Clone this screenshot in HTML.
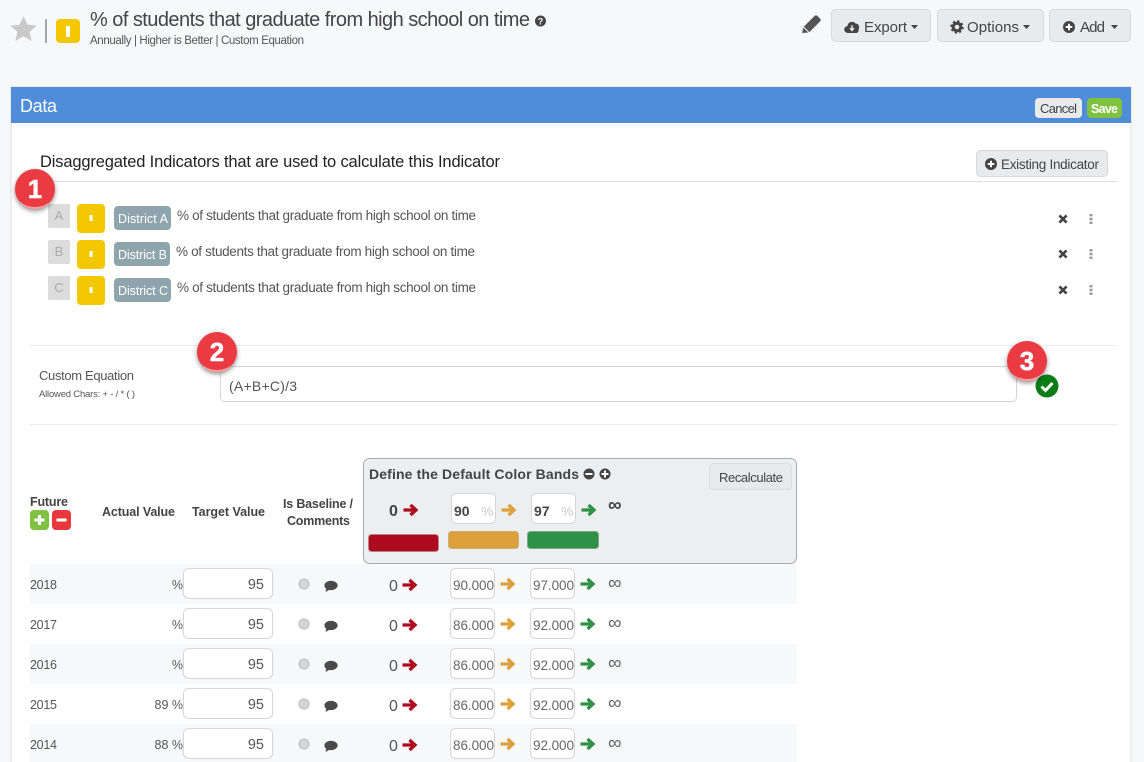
<!DOCTYPE html>
<html lang="en"><head><meta charset="utf-8"><title>Data</title>
<style>
html,body{margin:0;padding:0;width:1144px;height:762px;overflow:hidden;background:#f7f8fa}
svg{display:block}
text{font-family:"Liberation Sans",sans-serif;fill:#555}
.hd{font-weight:bold;font-size:12.5px;fill:#444}
.yr{font-size:12.5px}
.v{font-size:14.5px}
.n{font-size:13.5px;fill:#666}
.inp{fill:#fff;stroke:#d6d6d6}
.btn{fill:#e9eaec;stroke:#d8d8d8}
.b{font-size:15px;fill:#444}
.ind{font-size:13.5px;fill:#555}
.chip{font-size:12.5px;fill:#fff}
.ltr{font-size:13px;fill:#aaa;text-anchor:middle}
.badge{font-size:26px;font-weight:bold;fill:#fff;text-anchor:middle;stroke:#fff;stroke-width:.5px}
.inf{font-size:19px;fill:#666}
</style></head><body>
<svg xmlns="http://www.w3.org/2000/svg" width="1144" height="762" viewBox="0 0 1144 762">
<defs>
<path id="arr" d="M0.5 6.5H12.5M7.5 1.5l5.500 5-5.500 5" fill="none" stroke-width="3.3"/>
<g id="pc"><circle r="6" fill="#444"/><path d="M-3.300 0H3.300M0-3.300V3.300" stroke="#fff" stroke-width="2" fill="none"/></g>
<g id="cm"><ellipse cx="0" cy="-0.6" rx="6.6" ry="4.7" fill="#4a4a4a"/><path d="M-4.500 2L-5.500 6L-1 3.500z" fill="#4a4a4a"/></g>
<g id="rad"><circle r="5" fill="#d5d5d5" stroke="#bbb"/></g>
<g id="xx"><path d="M-3.600-3.600L3.600 3.600M3.600-3.600L-3.600 3.600" stroke="#444" stroke-width="2.6" fill="none"/></g>
<g id="dots"><path d="M-1.500-5h3v2.400h-3zM-1.500-1.200h3v2.400h-3zM-1.500 2.600h3v2.400h-3z" fill="#999"/></g>
<filter id="sh" x="-30%" y="-30%" width="160%" height="170%"><feDropShadow dx="0" dy="2" stdDeviation="2.5" flood-color="#000" flood-opacity=".45"/></filter>
<g id="bdg"><circle r="20" fill="#ea3a42" filter="url(#sh)"/><path d="M-16 12A20 20 0 0 0 16 12A24 24 0 0 1-16 12z" fill="#f9a0a3"/></g>
</defs>

<!-- page header -->
<path d="M23.500 16l3.900 8.600 9.200 1-6.900 6.200 1.900 9.200-8.100-4.700-8.100 4.700 1.900-9.200-6.900-6.200 9.200-1z" fill="#c9c9c9"/>
<rect x="45.500" y="19" width="1" height="24" fill="#555"/>
<rect x="56" y="19" width="24" height="24" rx="4" fill="#f4c800"/>
<rect x="66" y="26" width="4" height="11" fill="#fff"/>
<text x="90" y="26" font-size="20" textLength="440" style="fill:#444">% of students that graduate from high school on time</text>
<circle cx="540.500" cy="21" r="5.500" fill="#444"/>
<text x="540.500" y="24.500" font-size="9" font-weight="bold" text-anchor="middle" style="fill:#fff">?</text>
<text x="90" y="44" font-size="11.500" textLength="214">Annually | Higher is Better | Custom Equation</text>

<path d="M802 33l1.500-6 11-11a2 2 0 0 1 3 0l2.500 2.500a2 2 0 0 1 0 3l-11 11z" fill="#555"/>
<path d="M803.500 27l5.500 5.500" stroke="#f7f8fa" stroke-width="1" fill="none"/>

<rect class="btn" x="831.500" y="9.500" width="99" height="32" rx="4"/>
<rect class="btn" x="937.500" y="9.500" width="106" height="32" rx="4"/>
<rect class="btn" x="1049.500" y="9.500" width="81" height="32" rx="4"/>
<path d="M848 33a3.500 3.500 0 0 1-.5-7 4.500 4.500 0 0 1 8-2.500 3.500 3.500 0 0 1 3 5.500 3 3 0 0 1-2 4z" fill="#444"/>
<path d="M852 25v4.500M850 28l2 2.500 2-2.500" stroke="#e9eaec" stroke-width="1.400" fill="none"/>
<text class="b" x="864" y="32" textLength="43">Export</text>
<path d="M911 25h7l-3.500 4z" fill="#444"/>
<circle cx="957" cy="27" r="3.800" fill="none" stroke="#444" stroke-width="3"/>
<circle cx="957" cy="27" r="5.800" fill="none" stroke="#444" stroke-width="1.800" stroke-dasharray="2.300 2.250"/>
<text class="b" x="967" y="32" textLength="52">Options</text>
<path d="M1023 25h7l-3.500 4z" fill="#444"/>
<use href="#pc" x="1069" y="27"/>
<text class="b" x="1080" y="32" textLength="25">Add</text>
<path d="M1111 25h7l-3.500 4z" fill="#444"/>

<!-- panel -->
<rect x="11" y="87" width="1120" height="690" fill="#fff" stroke="#dcdee2"/>
<rect x="11" y="87" width="1120" height="36" fill="#4f8ddb"/>
<text x="20" y="112" font-size="18" textLength="37" style="fill:#fff">Data</text>
<rect x="1035" y="98" width="47" height="20" rx="4" fill="#e9eaec"/>
<text x="1040" y="113" font-size="13" textLength="37" style="fill:#444">Cancel</text>
<rect x="1087" y="98" width="35" height="20" rx="4" fill="#7fc241"/>
<text x="1091" y="113" font-size="12.500" font-weight="bold" textLength="27" style="fill:#fff">Save</text>

<text x="40" y="167" font-size="16.500" textLength="460" style="fill:#222">Disaggregated Indicators that are used to calculate this Indicator</text>
<rect class="btn" x="976.500" y="150.500" width="131" height="26" rx="4"/>
<use href="#pc" x="991" y="164"/>
<text x="1001" y="169" font-size="13.500" textLength="98" style="fill:#444">Existing Indicator</text>
<rect x="30" y="181" width="1088" height="1" fill="#dfe0e2"/>

<!-- indicators -->
<rect x="48" y="204" width="22" height="24" rx="2" fill="#dcdcdc"/><text class="ltr" x="59" y="220">A</text>
<rect x="77" y="204" width="28" height="29" rx="4" fill="#f4c800"/><rect x="89.500" y="215" width="3" height="6" fill="#fff"/>
<rect x="114" y="206" width="57" height="24" rx="4" fill="#8fa5ae"/><text class="chip" x="118" y="223" textLength="50">District A</text>
<text class="ind" x="177" y="220" textLength="299">% of students that graduate from high school on time</text>
<use href="#xx" x="1063" y="219"/><use href="#dots" x="1091" y="219"/>

<rect x="48" y="240" width="22" height="24" rx="2" fill="#dcdcdc"/><text class="ltr" x="59" y="256">B</text>
<rect x="77" y="240" width="28" height="29" rx="4" fill="#f4c800"/><rect x="89.500" y="251" width="3" height="6" fill="#fff"/>
<rect x="114" y="242" width="56" height="24" rx="4" fill="#8fa5ae"/><text class="chip" x="118" y="259" textLength="49">District B</text>
<text class="ind" x="176" y="256" textLength="299">% of students that graduate from high school on time</text>
<use href="#xx" x="1063" y="254"/><use href="#dots" x="1091" y="254"/>

<rect x="48" y="276" width="22" height="24" rx="2" fill="#dcdcdc"/><text class="ltr" x="59" y="292">C</text>
<rect x="77" y="276" width="28" height="29" rx="4" fill="#f4c800"/><rect x="89.500" y="287" width="3" height="6" fill="#fff"/>
<rect x="114" y="278" width="57" height="24" rx="4" fill="#8fa5ae"/><text class="chip" x="118" y="295" textLength="50">District C</text>
<text class="ind" x="177" y="292" textLength="299">% of students that graduate from high school on time</text>
<use href="#xx" x="1063" y="290"/><use href="#dots" x="1091" y="290"/>

<use href="#bdg" x="35" y="189"/><text class="badge" x="35" y="198">1</text>

<!-- equation -->
<rect x="30" y="345" width="1088" height="1" fill="#ececee"/>
<text x="39" y="380" font-size="13" textLength="95">Custom Equation</text>
<text x="39" y="397" font-size="9.500" textLength="96">Allowed Chars: + - / * ( )</text>
<rect class="inp" x="220.500" y="366.500" width="796" height="35" rx="4"/>
<text x="229" y="391" font-size="14" textLength="68">(A+B+C)/3</text>
<rect x="30" y="424" width="1088" height="1" fill="#ececee"/>
<use href="#bdg" x="217" y="352"/><text class="badge" x="217" y="361">2</text>
<circle cx="1047" cy="386" r="11.500" fill="#0a7d16"/>
<path d="M1041.500 386.500l4 4 7-7.500" stroke="#fff" stroke-width="3" fill="none"/>
<use href="#bdg" x="1027" y="361"/><text class="badge" x="1027" y="370">3</text>

<!-- table head -->
<text class="hd" x="30" y="506" textLength="38">Future</text>
<rect x="30" y="510" width="19" height="20" rx="4" fill="#7fc241"/><path d="M34.500 520h10M39.500 515v10" stroke="#fff" stroke-width="3" fill="none"/>
<rect x="52" y="510" width="19" height="20" rx="4" fill="#e8383e"/><path d="M56.500 520h10" stroke="#fff" stroke-width="3" fill="none"/>
<text class="hd" x="102" y="516" textLength="73">Actual Value</text>
<text class="hd" x="192" y="516" textLength="73">Target Value</text>
<text class="hd" x="283" y="508" textLength="70">Is Baseline /</text>
<text class="hd" x="287" y="525" textLength="63">Comments</text>

<!-- color bands -->
<rect x="363.500" y="458.500" width="433" height="105" rx="6" fill="#edeef0" stroke="#a9a9a9"/>
<text x="369" y="479" font-size="14" font-weight="bold" textLength="210" style="fill:#444">Define the Default Color Bands</text>
<circle cx="589" cy="474" r="5.500" fill="#444"/><path d="M585.500 474h7" stroke="#fff" stroke-width="2"/>
<circle cx="605" cy="474" r="5.500" fill="#444"/><path d="M601.500 474h7M605 470.500v7" stroke="#fff" stroke-width="2"/>
<rect x="709.500" y="463.500" width="82" height="26" rx="4" fill="#e8e9eb" stroke="#dcdcdc"/>
<text x="719" y="482" font-size="13" textLength="64" style="fill:#444">Recalculate</text>
<text x="389" y="516" font-size="16" font-weight="bold" style="fill:#444">0</text>
<use href="#arr" x="403" y="503.500" stroke="#ad0a1f"/>
<rect class="inp" x="451.500" y="493.500" width="44" height="30" rx="5"/>
<text x="454" y="516" font-size="14" font-weight="bold" style="fill:#444">90</text>
<text x="481" y="516" font-size="14" style="fill:#ccc">%</text>
<use href="#arr" x="501" y="503.500" stroke="#dea03a"/>
<rect class="inp" x="531.500" y="493.500" width="44" height="30" rx="5"/>
<text x="534" y="516" font-size="14" font-weight="bold" style="fill:#444">97</text>
<text x="561" y="516" font-size="14" style="fill:#ccc">%</text>
<use href="#arr" x="581" y="503.500" stroke="#2f9147"/>
<text class="inf" x="608" y="511" style="fill:#444;font-weight:bold">∞</text>
<rect x="368.500" y="534.500" width="70" height="17" rx="3" fill="#ad0a1f" stroke="#b9848a"/>
<rect x="448.500" y="531.500" width="70" height="17" rx="3" fill="#dea03a" stroke="#c9ad7c"/>
<rect x="527.500" y="531.500" width="71" height="17" rx="3" fill="#2f9147" stroke="#7fa88a"/>

<!-- rows -->
<rect x="30" y="564" width="767" height="40" fill="#f7f8fa"/>
<rect x="30" y="644" width="767" height="40" fill="#f7f8fa"/>
<rect x="30" y="724" width="767" height="38" fill="#f7f8fa"/>

<text class="yr" x="30" y="589" textLength="27">2018</text>
<text class="yr" x="183" y="589" text-anchor="end">%</text>
<rect class="inp" x="183.500" y="568.500" width="89" height="30" rx="5"/>
<text class="v" x="264" y="589" text-anchor="end">95</text>
<use href="#rad" x="304" y="584"/><use href="#cm" x="331" y="586"/>
<text x="389" y="591" font-size="16">0</text>
<use href="#arr" x="402" y="578.500" stroke="#ad0a1f"/>
<rect class="inp" x="450.500" y="568.500" width="44" height="30" rx="5"/>
<text class="n" x="453" y="590" textLength="41">90.000</text>
<use href="#arr" x="500" y="577.500" stroke="#dea03a"/>
<rect class="inp" x="530.500" y="568.500" width="44" height="30" rx="5"/>
<text class="n" x="533" y="590" textLength="41">97.000</text>
<use href="#arr" x="580" y="577.500" stroke="#2f9147"/>
<text class="inf" x="608" y="589">∞</text>

<text class="yr" x="30" y="629" textLength="27">2017</text>
<text class="yr" x="183" y="629" text-anchor="end">%</text>
<rect class="inp" x="183.500" y="608.500" width="89" height="30" rx="5"/>
<text class="v" x="264" y="629" text-anchor="end">95</text>
<use href="#rad" x="304" y="624"/><use href="#cm" x="331" y="626"/>
<text x="389" y="631" font-size="16">0</text>
<use href="#arr" x="402" y="618.500" stroke="#ad0a1f"/>
<rect class="inp" x="450.500" y="608.500" width="44" height="30" rx="5"/>
<text class="n" x="453" y="630" textLength="41">86.000</text>
<use href="#arr" x="500" y="617.500" stroke="#dea03a"/>
<rect class="inp" x="530.500" y="608.500" width="44" height="30" rx="5"/>
<text class="n" x="533" y="630" textLength="41">92.000</text>
<use href="#arr" x="580" y="617.500" stroke="#2f9147"/>
<text class="inf" x="608" y="629">∞</text>

<text class="yr" x="30" y="669" textLength="27">2016</text>
<text class="yr" x="183" y="669" text-anchor="end">%</text>
<rect class="inp" x="183.500" y="648.500" width="89" height="30" rx="5"/>
<text class="v" x="264" y="669" text-anchor="end">95</text>
<use href="#rad" x="304" y="664"/><use href="#cm" x="331" y="666"/>
<text x="389" y="671" font-size="16">0</text>
<use href="#arr" x="402" y="658.500" stroke="#ad0a1f"/>
<rect class="inp" x="450.500" y="648.500" width="44" height="30" rx="5"/>
<text class="n" x="453" y="670" textLength="41">86.000</text>
<use href="#arr" x="500" y="657.500" stroke="#dea03a"/>
<rect class="inp" x="530.500" y="648.500" width="44" height="30" rx="5"/>
<text class="n" x="533" y="670" textLength="41">92.000</text>
<use href="#arr" x="580" y="657.500" stroke="#2f9147"/>
<text class="inf" x="608" y="669">∞</text>

<text class="yr" x="30" y="709" textLength="27">2015</text>
<text class="yr" x="183" y="709" text-anchor="end">89 %</text>
<rect class="inp" x="183.500" y="688.500" width="89" height="30" rx="5"/>
<text class="v" x="264" y="709" text-anchor="end">95</text>
<use href="#rad" x="304" y="704"/><use href="#cm" x="331" y="706"/>
<text x="389" y="711" font-size="16">0</text>
<use href="#arr" x="402" y="698.500" stroke="#ad0a1f"/>
<rect class="inp" x="450.500" y="688.500" width="44" height="30" rx="5"/>
<text class="n" x="453" y="710" textLength="41">86.000</text>
<use href="#arr" x="500" y="697.500" stroke="#dea03a"/>
<rect class="inp" x="530.500" y="688.500" width="44" height="30" rx="5"/>
<text class="n" x="533" y="710" textLength="41">92.000</text>
<use href="#arr" x="580" y="697.500" stroke="#2f9147"/>
<text class="inf" x="608" y="709">∞</text>

<text class="yr" x="30" y="749" textLength="27">2014</text>
<text class="yr" x="183" y="749" text-anchor="end">88 %</text>
<rect class="inp" x="183.500" y="728.500" width="89" height="30" rx="5"/>
<text class="v" x="264" y="749" text-anchor="end">95</text>
<use href="#rad" x="304" y="744"/><use href="#cm" x="331" y="746"/>
<text x="389" y="751" font-size="16">0</text>
<use href="#arr" x="402" y="738.500" stroke="#ad0a1f"/>
<rect class="inp" x="450.500" y="728.500" width="44" height="30" rx="5"/>
<text class="n" x="453" y="750" textLength="41">86.000</text>
<use href="#arr" x="500" y="737.500" stroke="#dea03a"/>
<rect class="inp" x="530.500" y="728.500" width="44" height="30" rx="5"/>
<text class="n" x="533" y="750" textLength="41">92.000</text>
<use href="#arr" x="580" y="737.500" stroke="#2f9147"/>
<text class="inf" x="608" y="749">∞</text>
</svg>
</body></html>
